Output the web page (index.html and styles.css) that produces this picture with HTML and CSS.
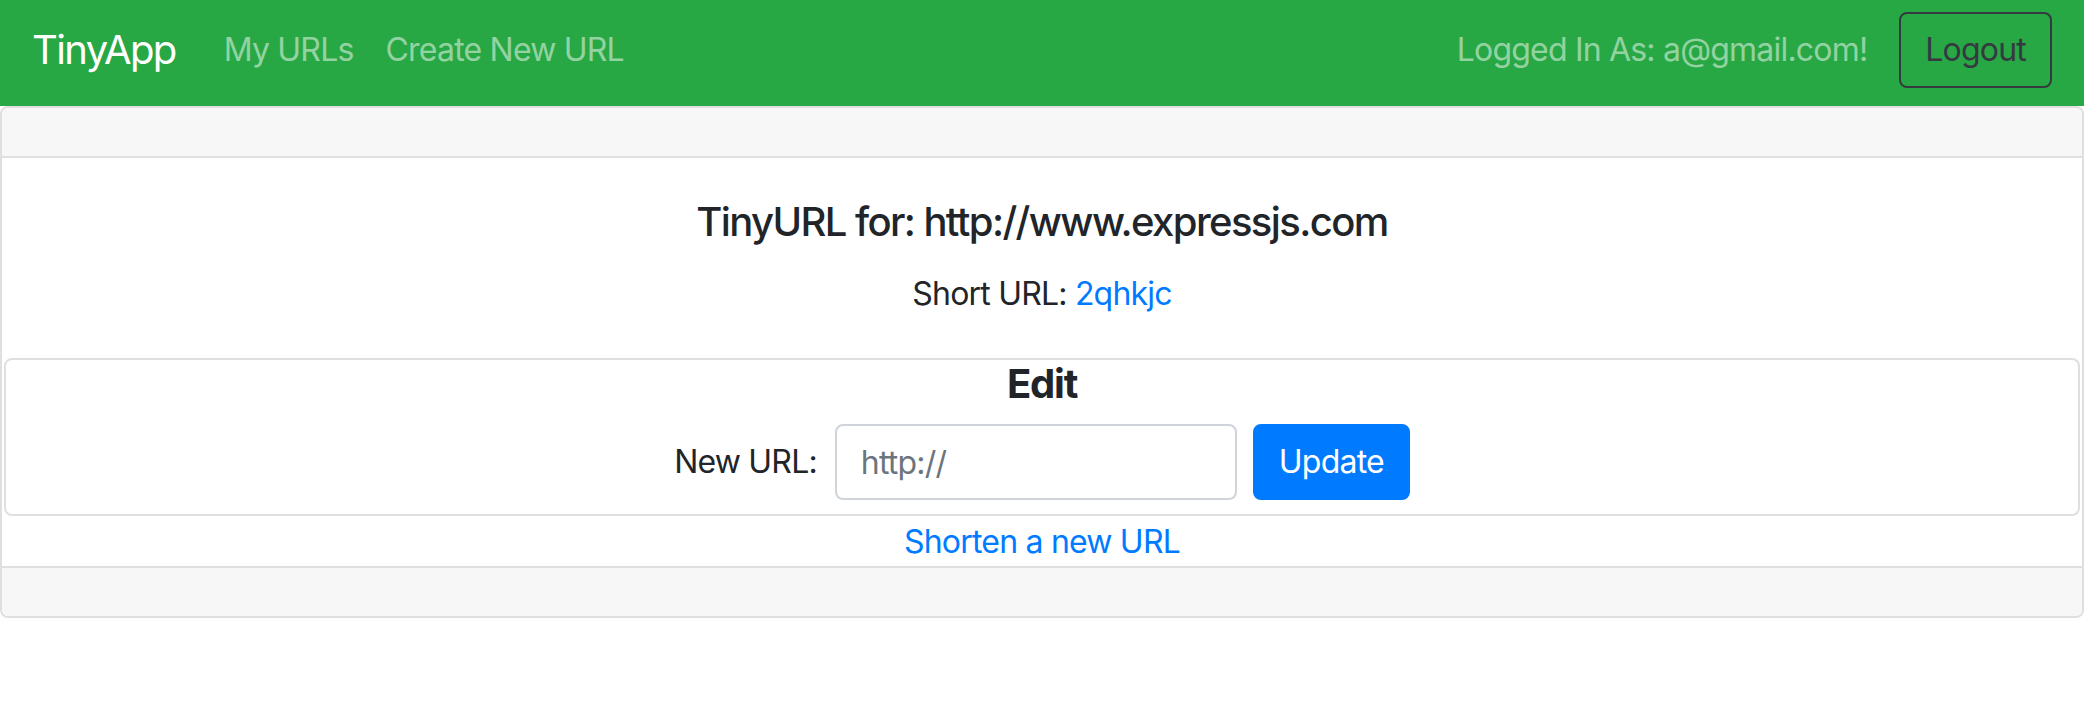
FILE: index.html
```html
<!DOCTYPE html>
<html lang="en">
<head>
<meta charset="utf-8">
<title>TinyApp</title>
<link rel="stylesheet" href="styles.css">
</head>
<body>
<nav class="navbar">
  <a class="brand" href="#">TinyApp</a>
  <ul class="nav">
    <li><a class="nav-link" href="#">My URLs</a></li>
    <li><a class="nav-link" href="#">Create New URL</a></li>
  </ul>
  <div class="nav-right">
    <span class="user">Logged In As: a@gmail.com!</span>
    <button class="btn btn-outline-dark" type="button">Logout</button>
  </div>
</nav>
<main class="card">
  <div class="card-header"></div>
  <div class="card-body">
    <h5 class="card-title">TinyURL for: http://www.expressjs.com</h5>
    <p class="card-text">Short URL: <a href="#">2qhkjc</a></p>
  </div>
  <div class="card edit-card">
    <h3 class="edit-title">Edit</h3>
    <form class="edit-form">
      <label class="edit-label" for="newurl">New URL:</label>
      <input class="form-control" id="newurl" type="text" placeholder="http://">
      <button class="btn btn-primary" type="submit">Update</button>
    </form>
  </div>
  <a class="new-link" href="#">Shorten a new URL</a>
  <div class="card-footer"></div>
</main>
</body>
</html>
```

FILE: styles.css
```css
* { box-sizing: border-box; }

html, body {
  margin: 0;
  padding: 0;
  background: #fff;
}

body {
  font-family: Inter, "Liberation Sans", sans-serif;
  font-size: 32px;
  line-height: 1.5;
  letter-spacing: -0.025em;
  color: #212529;
}

a { text-decoration: none; color: #007bff; }

.navbar {
  display: flex;
  align-items: center;
  background: #28a745;
  padding: 12px 32px 18px;
  height: 106px;
}

.brand {
  color: #fff;
  font-size: 40px;
  line-height: 1.5;
  letter-spacing: -0.04em;
  padding: 10px 0;
  margin-right: 32px;
}

.nav {
  display: flex;
  list-style: none;
  margin: 0;
  padding: 0;
  flex: 1;
}

.nav-link {
  display: block;
  padding: 0 16px;
  color: rgba(255, 255, 255, 0.5);
}

.nav-right {
  display: flex;
  align-items: center;
  gap: 32px;
}

.user {
  color: rgba(255, 255, 255, 0.5);
}

.btn {
  font-family: inherit;
  font-size: 32px;
  line-height: 1.5;
  letter-spacing: -0.025em;
  padding: 11px 24px;
  border-radius: 8px;
  border: 2px solid transparent;
  cursor: pointer;
  height: 76px;
}

.btn-outline-dark {
  background: transparent;
  color: #343a40;
  border-color: #343a40;
}

.btn-primary {
  background: #007bff;
  color: #fff;
  border-color: #007bff;
}

.card {
  display: flex;
  flex-direction: column;
  border: 2px solid #dfdfdf;
  border-radius: 8px;
  background: #fff;
  text-align: center;
}

.card-header {
  height: 50px;
  background: #f7f7f7;
  border-bottom: 2px solid #dfdfdf;
  border-radius: 6px 6px 0 0;
}

.card-body {
  padding: 40px 40px 40px;
}

.card-title {
  margin: 0 0 24px;
  font-size: 40px;
  font-weight: 500;
  line-height: 1.2;
  letter-spacing: -0.04em;
}

.card-text {
  margin: 0;
}

.edit-card {
  margin: 0 2px;
  padding-bottom: 14px;
}

.edit-title {
  margin: 0 0 16px;
  font-size: 40px;
  font-weight: 700;
  line-height: 1.2;
  letter-spacing: -0.03em;
}

.edit-form {
  display: flex;
  align-items: center;
  justify-content: center;
}

.edit-label {
  margin-right: 18px;
}

.form-control {
  width: 402px;
  height: 76px;
  font-family: inherit;
  font-size: 32px;
  line-height: 1.5;
  letter-spacing: -0.025em;
  padding: 12px 24px;
  border: 2px solid #ced4da;
  border-radius: 8px;
  color: #495057;
  margin-right: 16px;
}

.form-control::placeholder {
  color: #6c757d;
}

.new-link {
  display: block;
  line-height: 48px;
  padding: 2px 0 0;
}

.card-footer {
  height: 50px;
  background: #f7f7f7;
  border-top: 2px solid #dfdfdf;
  border-radius: 0 0 6px 6px;
}
```
